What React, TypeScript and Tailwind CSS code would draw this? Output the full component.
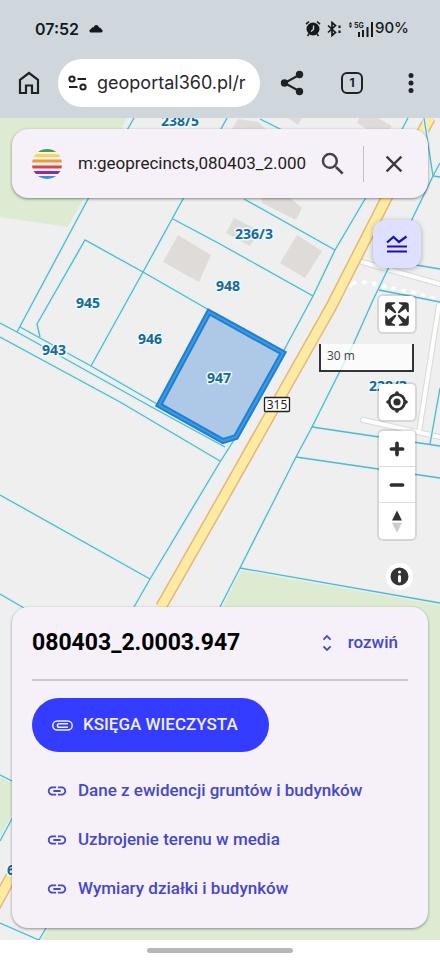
/**
 * @component App
 * @summary Mobile map view with parcel search, map controls and parcel details
 */

import type { ReactNode } from 'react';
import { MdClose, MdLink, MdSearch, MdUnfoldMore } from 'react-icons/md';

const parcelLines = [
  '134,118 88,199 17,332',
  '227,118 183,199 143,272 91,366',
  '40,337 37,324 85,240 143,272 209,310',
  '173,219 220,244 313,296',
  '244,199 335,250',
  '260,119 282,130',
  '408,118 365,199 335,250 313,296 283,352 236,437 220,462 150,579 134,607',
  '0,323 17,332 157,410 225,447',
  '20,327 91,366 157,404',
  '0,337 120,402 220,461',
  '0,495 150,579',
  '0,594 24,608',
  '440,163 433,176 387,271 373,300 353,345 312,427 296,457 240,568 220,607',
  '424,118 433,176 440,177',
  '379,290 440,302',
  '416,265 440,269',
  '312,427 440,446',
  '296,457 440,478',
  '240,568 440,603',
  '430,444 440,388',
  '0,775 12,781',
  '0,841 14,815',
  '0,923 39,940 46,928',
];

const buildings = [
  '178,235 211,255 199,282 163,262',
  '297,235 322,251 305,278 280,263',
  '262,198 290,198 302,208 296,220 262,203',
  '234,218 260,231 250,246 226,233',
  '238,119 258,122 268,131 231,131',
  '359,118 378,118 392,126 388,131 370,131 357,123',
  '288,118 302,118 298,125',
];

const roadPoints = '430,118 386,199 331,307 222,500 161,607';

const labels = [
  { x: 180, y: 126, text: '238/5' },
  { x: 254, y: 239, text: '236/3' },
  { x: 228, y: 291, text: '948' },
  { x: 88, y: 308, text: '945' },
  { x: 150, y: 344, text: '946' },
  { x: 54, y: 355, text: '943' },
  { x: 219, y: 383, text: '947' },
  { x: 388, y: 391, text: '228/3' },
  { x: 11, y: 875, text: '6' },
];

const links = [
  'Dane z ewidencji gruntów i budynków',
  'Uzbrojenie terenu w media',
  'Wymiary działki i budynków',
];

const ParcelMap = () => (
  <svg
    className="absolute inset-0 -z-10 h-full w-full"
    viewBox="0 118 440 822"
    preserveAspectRatio="xMidYMin slice"
    role="img"
    aria-label="Mapa działek"
  >
    <rect y="118" width="440" height="822" fill="#efefef" />
    <g fill="#dcebd2">
      <polygon points="0,118 127,118 68,227 0,217" />
      <polygon points="240,568 440,603 440,940 39,940 46,928 220,607" />
      <polygon points="0,775 12,781 20,800 0,838" />
    </g>
    {buildings.map((points) => (
      <polygon key={points} points={points} fill="#dfdbd8" />
    ))}
    <g fill="none" strokeLinecap="round">
      <g stroke="#d9d9d6" strokeWidth="6">
        <polyline points="362,262 440,284" />
        <polyline points="439,305 419,432" />
        <polyline points="363,420 440,437" />
      </g>
      <g stroke="#fdfdfc" strokeWidth="4">
        <polyline points="362,262 440,284" />
        <polyline points="439,305 419,432" />
        <polyline points="363,420 440,437" />
      </g>
      <polyline points="354,283 368,282 386,287 415,293 440,300" stroke="#fff" strokeWidth="4" strokeDasharray="1 9" />
      <polyline points="345,286 350,285" stroke="#fff" strokeWidth="5" />
    </g>
    <g fill="none">
      <polyline points={roadPoints} stroke="#e5b67c" strokeWidth="12" />
      <polyline points={roadPoints} stroke="#feeba2" strokeWidth="9" />
      <polyline points="-6,908 30,842" stroke="#e5b67c" strokeWidth="12" />
      <polyline points="-6,908 30,842" stroke="#feeba2" strokeWidth="9" />
      {parcelLines.map((points) => (
        <polyline key={points} points={points} stroke="#d9f5f8" strokeWidth="4" />
      ))}
      {parcelLines.map((points) => (
        <polyline key={points} points={points} stroke="#67b0c0" strokeWidth="1.3" />
      ))}
    </g>
    <g strokeLinejoin="miter">
      <polygon points="209,312 283,353 236,437 223,441 159,405" fill="#aec9e7" stroke="#1f7fd1" strokeWidth="6" />
      <polygon points="209,312 283,353 236,437 223,441 159,405" fill="none" stroke="#3c9be3" strokeWidth="2" />
    </g>
    <rect x="264.500" y="397.500" width="25" height="14" rx="1" fill="#fff" stroke="#222" strokeWidth="1.3" />
    <text x="277" y="409" textAnchor="middle" fontSize="12" fill="#222" className="font-['Noto_Sans',sans-serif]">
      315
    </text>
    <g
      className="font-['Noto_Sans',sans-serif] font-bold"
      fontSize="14"
      textAnchor="middle"
      fill="#1c6796"
      stroke="#eafbff"
      strokeWidth="3"
      strokeLinejoin="round"
      paintOrder="stroke"
    >
      {labels.map(({ x, y, text }) => (
        <text key={text} x={x} y={y}>
          {text}
        </text>
      ))}
    </g>
  </svg>
);

const StatusBar = () => (
  <div className="flex h-[57px] items-center justify-between pl-[35px] pr-[31px] font-['Inter',sans-serif] text-[#15191c]">
    <div className="flex items-center gap-2.5">
      <span className="text-base font-semibold">07:52</span>
      <svg width="14" height="9" viewBox="0 0 14 9" fill="currentColor" aria-hidden="true">
        <path d="M2.500 8.500C-.2 8.500-.3 5.200 2.200 4.900 2.600 3.300 4 3.300 4.600 3.400 5.500-.1 9.400.2 10 3.400c1.700 0 2.100.9 2.300 1.800 2 .5 1.700 3.300-.3 3.300z" />
      </svg>
    </div>
    <div className="flex items-center">
      <svg width="16" height="17" viewBox="0 0 16 17" fill="currentColor" aria-hidden="true">
        <circle cx="8" cy="9" r="6.500" />
        <path d="M1 4.200 4 1.500M15 4.200 12 1.500M4 14l-1.500 2M12 14l1.500 2" stroke="currentColor" strokeWidth="1.600" />
        <path d="M8.500 5.500v4L6 11.500" stroke="#cfd7dd" strokeWidth="1.300" fill="none" />
      </svg>
      <svg className="ml-1.5" width="15" height="16" viewBox="0 0 15 16" fill="none" stroke="currentColor" aria-hidden="true">
        <path d="M1 4.500l7.500 7-3.500 3v-13l3.500 3-7.500 7" strokeWidth="1.700" />
        <path d="M12.500 4.500v2.500M12.500 9.500V12" strokeWidth="2.200" />
      </svg>
      <svg className="ml-1.5" width="27" height="18" viewBox="0 0 27 18" fill="currentColor" aria-hidden="true">
        <path d="M2.500 2l1.800 2.400H.7zM2.500 8L.7 5.600h3.600z" />
        <text x="6" y="8" fontSize="7" fontWeight="700">
          5G
        </text>
        <path d="M10 12h2v5h-2zM14 10h2v7h-2zM18.500 7h2v10h-2zM23 2h2v15h-2z" />
      </svg>
      <span className="text-[15px] font-medium">90%</span>
    </div>
  </div>
);

const BrowserBar = () => (
  <div className="flex items-center pb-[11px] pl-1 pt-0.5 text-[#1d2226]">
    <button type="button" aria-label="Strona główna" className="flex h-12 w-[50px] items-center justify-center">
      <svg width="22" height="24" viewBox="0 0 22 24" fill="none" stroke="currentColor" strokeWidth="2.200">
        <path d="M2 8.800 11 2l9 6.800V22h-6v-7.500H8V22H2z" />
      </svg>
    </button>
    <label className="ml-1 mr-0.5 flex h-12 min-w-0 flex-1 items-center gap-2.5 rounded-full bg-white pl-2.5 pr-2">
      <svg className="shrink-0" width="19" height="16" viewBox="0 0 19 16" fill="none" stroke="currentColor" strokeWidth="2" aria-hidden="true">
        <circle cx="4" cy="4" r="2.600" />
        <path d="M9.500 4H18M1 12h8.500" />
        <circle cx="15" cy="12" r="2.600" />
      </svg>
      <input
        type="text"
        aria-label="Adres"
        defaultValue="geoportal360.pl/r"
        className="w-full min-w-0 font-['Inter',sans-serif] text-lg text-[#26292c] outline-none"
      />
    </label>
    <button type="button" aria-label="Udostępnij" className="flex h-12 w-[60px] items-center justify-center">
      <svg width="24" height="26" viewBox="0 0 24 26" fill="currentColor">
        <path d="M20 4.500 4.500 13 20 21.500" fill="none" stroke="currentColor" strokeWidth="2" />
        <circle cx="19.500" cy="4.500" r="3.700" />
        <circle cx="4.500" cy="13" r="3.700" />
        <circle cx="19.500" cy="21.500" r="3.700" />
      </svg>
    </button>
    <button type="button" aria-label="Karty" className="flex h-12 w-[60px] items-center justify-center">
      <span className="flex size-[22px] items-center justify-center rounded-md border-2 border-current font-['Inter',sans-serif] text-xs font-bold">
        1
      </span>
    </button>
    <button type="button" aria-label="Menu" className="flex h-12 w-[58px] items-center justify-center">
      <svg width="6" height="20" viewBox="0 0 6 20" fill="currentColor">
        <circle cx="3" cy="2.600" r="2.500" />
        <circle cx="3" cy="10" r="2.500" />
        <circle cx="3" cy="17.400" r="2.500" />
      </svg>
    </button>
  </div>
);

const Logo = () => (
  <svg className="shrink-0" width="30" height="30" viewBox="0 0 30 30" aria-hidden="true">
    <clipPath id="logo-circle">
      <circle cx="15" cy="15" r="15" />
    </clipPath>
    <g clipPath="url(#logo-circle)">
      <rect width="30" height="3" fill="#4a9a55" />
      <rect y="5" width="30" height="3" fill="#f7d84c" />
      <rect y="10.500" width="30" height="3" fill="#ee9a34" />
      <rect y="16.500" width="30" height="3" fill="#d8473f" />
      <rect y="22" width="30" height="3" fill="#8b2fa5" />
      <rect y="27" width="30" height="3" fill="#3b8fd8" />
    </g>
  </svg>
);

const PaperclipIcon = () => (
  <svg width="21" height="11" viewBox="0 0 21 11" fill="none" stroke="currentColor" strokeWidth="1.500" aria-hidden="true">
    <path d="M16 7.300H7.200a1.800 1.800 0 0 1 0-3.600H16" />
    <path d="M5.300 1h10.400a4.500 4.500 0 0 1 0 9H5.300a4.500 4.500 0 0 1 0-9z" />
  </svg>
);

const SearchBar = () => (
  <form className="flex h-[69px] items-center rounded-2xl bg-[#f6f1f8] pl-5 pr-4 shadow-[0_1px_3px_rgba(0,0,0,0.45)]">
    <Logo />
    <input
      type="text"
      aria-label="Szukaj działki"
      defaultValue="m:geoprecincts,080403_2.000"
      className="ml-4 w-full min-w-0 flex-1 font-['Roboto',sans-serif] text-[17px] text-[#1f1c22] outline-none"
    />
    <button type="button" aria-label="Szukaj" className="ml-2 flex size-9 items-center justify-center text-[#444147]">
      <MdSearch size={30} />
    </button>
    <span className="ml-3 h-9 w-px bg-[#c4bfc6]" />
    <button type="button" aria-label="Wyczyść" className="ml-3 flex size-9 items-center justify-center text-[#3c393f]">
      <MdClose size={28} />
    </button>
  </form>
);

const ControlButton = ({ label, viewBox = '0 0 29 29', children }: { label: string; viewBox?: string; children: ReactNode }) => (
  <button type="button" aria-label={label} className="flex size-9 items-center justify-center">
    <svg className="size-9" viewBox={viewBox} fill="#2f2f2f" fillRule="evenodd">
      {children}
    </svg>
  </button>
);

const controlGroup = 'rounded bg-white shadow-[0_0_0_2px_rgba(0,0,0,0.1)]';

const MapControls = () => (
  <div className="flex flex-col items-end pr-[13px]">
    <button
      type="button"
      aria-label="Warstwy"
      className="mt-[22px] -mr-1.5 flex size-12 items-center justify-center rounded-xl bg-[#dfe0ff] text-[#1710b8] shadow-[0_1px_5px_rgba(0,0,0,0.3)]"
    >
      <svg width="22" height="18" viewBox="0 0 22 18" fill="none" stroke="currentColor" strokeWidth="2.200">
        <path d="M1 7.500 7.500 2l5.500 5L20.500 1.500M1 11.500h20M1 16.500h20" />
      </svg>
    </button>
    <div className={`${controlGroup} mt-7`}>
      <ControlButton label="Pełny ekran">
        <path d="M24 16v5.500c0 1.750-.75 2.500-2.500 2.500H16v-1l3-1.500-4-5.500 1-1 5.500 4 1.500-3zM6 16l1.500 3 5.500-4 1 1-4 5.500 3 1.500v1H7.500C5.750 24 5 23.250 5 21.500V16zm7-11v1l-3 1.500 4 5.500-1 1-5.500-4L6 13H5V7.500C5 5.750 5.750 5 7.500 5zm11 2.500c0-1.750-.75-2.500-2.500-2.500H16v1l3 1.500-4 5.500 1 1 5.500-4 1.500 3h1z" />
      </ControlButton>
    </div>
    <div className="mt-3 mr-px flex h-7 w-[95px] items-center border-2 border-t-0 border-[#333] bg-white/75 px-1.5 pb-0.5 font-['Open_Sans',sans-serif] text-xs text-[#444]">
      30 m
    </div>
    <div className={`${controlGroup} mt-3`}>
      <ControlButton label="Moja lokalizacja" viewBox="0 0 20 20">
        <path d="M10 4C9 4 9 5 9 5v.1A5 5 0 0 0 5.100 9H5s-1 0-1 1 1 1 1 1h.1A5 5 0 0 0 9 14.900v.1s0 1 1 1 1-1 1-1v-.1a5 5 0 0 0 3.900-3.900h.1s1 0 1-1-1-1-1-1h-.1A5 5 0 0 0 11 5.100V5s0-1-1-1m0 2.500a3.500 3.500 0 1 1 0 7 3.500 3.500 0 1 1 0-7" />
        <circle cx="10" cy="10" r="2" />
      </ControlButton>
    </div>
    <div className={`${controlGroup} mt-[11px] flex flex-col divide-y divide-[#ddd]`}>
      <ControlButton label="Przybliż">
        <path d="M14.500 8.500c-.75 0-1.500.75-1.500 1.500v3h-3c-.75 0-1.500.75-1.500 1.500S9.250 16 10 16h3v3c0 .75.75 1.500 1.500 1.500S16 19.750 16 19v-3h3c.75 0 1.500-.75 1.500-1.500S19.750 13 19 13h-3v-3c0-.75-.75-1.500-1.500-1.500" />
      </ControlButton>
      <ControlButton label="Oddal">
        <path d="M10 13c-.75 0-1.500.75-1.500 1.500S9.250 16 10 16h9c.75 0 1.500-.75 1.500-1.500S19.750 13 19 13z" />
      </ControlButton>
      <ControlButton label="Obróć na północ">
        <path d="m10.500 14 4-8 4 8z" />
        <path d="m10.500 16 4 8 4-8z" fill="#ccc" />
      </ControlButton>
    </div>
    <button type="button" aria-label="Informacje" className="mt-6 mr-0.5 size-[27px] rounded-full bg-white">
      <svg className="size-full" viewBox="0 0 18 18" fill="#333" fillRule="evenodd">
        <path d="M3 9a6 6 0 1 0 12 0 6 6 0 1 0-12 0m5-3a1 1 0 1 0 2 0 1 1 0 1 0-2 0m0 3a1 1 0 1 1 2 0v3a1 1 0 1 1-2 0" />
      </svg>
    </button>
  </div>
);

const ParcelCard = () => (
  <article className="mt-auto rounded-2xl bg-[#f6f1f8] px-5 pb-[15px] font-['Roboto',sans-serif] shadow-[0_1px_3px_rgba(0,0,0,0.4)]">
    <header className="flex h-[74px] items-center justify-between border-b-2 border-[#cbc6cd]">
      <h1 className="text-[23px] font-bold text-black">080403_2.0003.947</h1>
      <button type="button" className="mr-2.5 flex items-center gap-2.5 text-[17px] font-medium text-[#4548c8]">
        <MdUnfoldMore size={22} />
        rozwiń
      </button>
    </header>
    <button
      type="button"
      className="mt-[17px] flex h-[54px] items-center gap-2.5 rounded-full bg-[#343cff] pl-5 pr-[31px] text-[17px] font-medium text-[#f0effa]"
    >
      <PaperclipIcon />
      KSIĘGA WIECZYSTA
    </button>
    <nav className="mt-3.5 flex flex-col pl-3.5">
      {links.map((link) => (
        <a key={link} href="#" className="flex h-[49px] items-center gap-2.5 text-[17px] font-medium text-[#4548c8]">
          <MdLink size={22} />
          {link}
        </a>
      ))}
    </nav>
  </article>
);

export default function App() {
  return (
    <div className="flex min-h-screen flex-col bg-white">
      <header className="bg-[#cfd7dd]">
        <StatusBar />
        <BrowserBar />
      </header>
      <main className="relative isolate flex flex-1 flex-col overflow-hidden p-3 pt-[11px]">
        <ParcelMap />
        <SearchBar />
        <MapControls />
        <ParcelCard />
      </main>
      <footer className="flex h-5 items-center justify-center">
        <span className="h-[5px] w-1/3 rounded-full bg-[#b7b7b7]" />
      </footer>
    </div>
  );
}
